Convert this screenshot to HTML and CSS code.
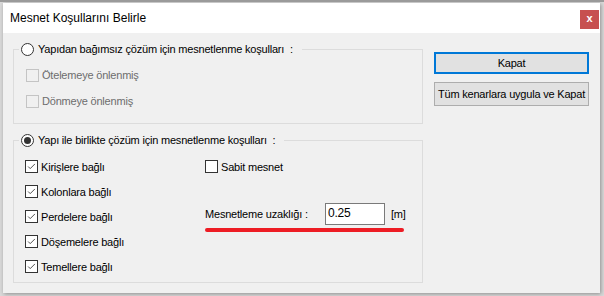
FILE: index.html
```html
<!DOCTYPE html>
<html lang="tr">
<head>
<meta charset="utf-8">
<link rel="stylesheet" href="styles.css">
</head>
<body>
<div class="window">
  <div class="titlebar">
    <span class="title">Mesnet Koşullarını Belirle</span>
    <span class="close">x</span>
  </div>
  <div class="content">
    <div class="groups">
      <fieldset class="group group-a">
        <legend class="legend"><span class="radio"></span><span>Yapıdan bağımsız çözüm için mesnetlenme koşulları&nbsp; :</span></legend>
        <div class="inner-a">
          <div class="row disabled"><span class="check"></span><span>Ötelemeye önlenmiş</span></div>
          <div class="row disabled"><span class="check"></span><span>Dönmeye önlenmiş</span></div>
        </div>
      </fieldset>
      <fieldset class="group group-b">
        <legend class="legend"><span class="radio on"></span><span>Yapı ile birlikte çözüm için mesnetlenme koşulları&nbsp; :</span></legend>
        <div class="cols">
          <div class="col-left">
            <div class="row"><span class="check on"><svg viewBox="0 0 13 13"><polyline points="2.5,6.5 5,9 10.5,3.5"/></svg></span><span>Kirişlere bağlı</span></div>
            <div class="row"><span class="check on"><svg viewBox="0 0 13 13"><polyline points="2.5,6.5 5,9 10.5,3.5"/></svg></span><span>Kolonlara bağlı</span></div>
            <div class="row"><span class="check on"><svg viewBox="0 0 13 13"><polyline points="2.5,6.5 5,9 10.5,3.5"/></svg></span><span>Perdelere bağlı</span></div>
            <div class="row"><span class="check on"><svg viewBox="0 0 13 13"><polyline points="2.5,6.5 5,9 10.5,3.5"/></svg></span><span>Döşemelere bağlı</span></div>
            <div class="row"><span class="check on"><svg viewBox="0 0 13 13"><polyline points="2.5,6.5 5,9 10.5,3.5"/></svg></span><span>Temellere bağlı</span></div>
          </div>
          <div class="col-right">
            <div class="row"><span class="check"></span><span>Sabit mesnet</span></div>
            <div class="dist">
              <span class="dist-label">Mesnetleme uzaklığı :</span>
              <span class="input">0.25</span>
              <span class="unit">[m]</span>
            </div>
            <div class="mark"></div>
          </div>
        </div>
      </fieldset>
    </div>
    <div class="buttons">
      <div class="btn primary">Kapat</div>
      <div class="btn tall">Tüm kenarlara uygula ve Kapat</div>
    </div>
  </div>
</div>
</body>
</html>
```

FILE: styles.css
```css
html, body {
  margin: 0;
  padding: 0;
}
body {
  width: 604px;
  height: 296px;
  overflow: hidden;
  background: #d9d9d9;
  border-top: 2px solid #9a9a9a;
  box-sizing: border-box;
  font-family: "Liberation Sans", Arial, sans-serif;
  font-size: 11px;
  letter-spacing: -0.2px;
  color: #000;
}
.window {
  margin: 1px 0 0 3px;
  width: 597px;
  height: 290px;
  background: #f0f0f0;
  box-shadow: 1px 1px 4px rgba(0, 0, 0, 0.35);
  display: flex;
  flex-direction: column;
}
.titlebar {
  height: 30px;
  background: #fff;
  display: flex;
  align-items: center;
  justify-content: space-between;
  padding-left: 7px;
}
.title {
  font-size: 12px;
  letter-spacing: 0;
  color: #000;
}
.close {
  align-self: flex-start;
  margin-top: 7px;
  margin-right: 1px;
  width: 19px;
  height: 19px;
  background: #c75050;
  color: #fff;
  font-weight: bold;
  font-size: 11px;
  letter-spacing: 0;
  line-height: 17px;
  text-align: center;
}
.content {
  display: flex;
  padding: 8px 0 0 10px;
  gap: 11px;
}
.groups {
  width: 410px;
  display: flex;
  flex-direction: column;
}
.group {
  margin: 0;
  padding: 0;
  border: 1px solid #dcdcdc;
  min-width: 0;
}
.legend {
  display: flex;
  align-items: center;
  gap: 4px;
  height: 16px;
  margin-left: 5px;
  padding: 0 9px 0 2px;
}
.radio {
  width: 13px;
  height: 13px;
  box-sizing: border-box;
  border: 1px solid #333;
  border-radius: 50%;
  background: #fff;
  display: flex;
  align-items: center;
  justify-content: center;
}
.radio.on::after {
  content: "";
  width: 7px;
  height: 7px;
  border-radius: 50%;
  background: #333;
}
.inner-a {
  padding: 5px 0 9px 12px;
}
.inner-a .row {
  height: 26px;
}
.group-b {
  margin-top: 8px;
}
.cols {
  display: flex;
  padding: 6px 0 3px 11px;
}
.row {
  display: flex;
  align-items: center;
  gap: 3px;
  height: 25px;
}
.check {
  width: 13px;
  height: 13px;
  box-sizing: border-box;
  border: 1px solid #333;
  background: #fff;
  flex: none;
}
.check svg {
  display: block;
  width: 11px;
  height: 11px;
  fill: none;
  stroke: #444;
  stroke-width: 1.1;
}
.disabled {
  color: #6d6d6d;
}
.disabled .check {
  border-color: #c4c4c4;
  background: #f0f0f0;
}
.col-left {
  width: 180px;
}
.col-right {
  display: flex;
  flex-direction: column;
}
.dist {
  margin-top: 24px;
  display: flex;
  align-items: center;
  height: 22px;
}
.dist-label {
  width: 120px;
}
.input {
  width: 60px;
  height: 22px;
  box-sizing: border-box;
  border: 1px solid #7a7a7a;
  background: #fff;
  padding-left: 2px;
  line-height: 19px;
  font-size: 12px;
}
.unit {
  margin-left: 6px;
}
.mark {
  margin-top: 3px;
  width: 199px;
  height: 4px;
  border-radius: 2px;
  background: #ed1c24;
}
.buttons {
  display: flex;
  flex-direction: column;
  padding-top: 11px;
  gap: 8px;
  width: 155px;
}
.btn {
  box-sizing: border-box;
  background: #e1e1e1;
  border: 1px solid #adadad;
  height: 24px;
  display: flex;
  align-items: center;
  justify-content: center;
}
.btn.primary {
  height: 22px;
  border: 2px solid #0078d7;
}
```
